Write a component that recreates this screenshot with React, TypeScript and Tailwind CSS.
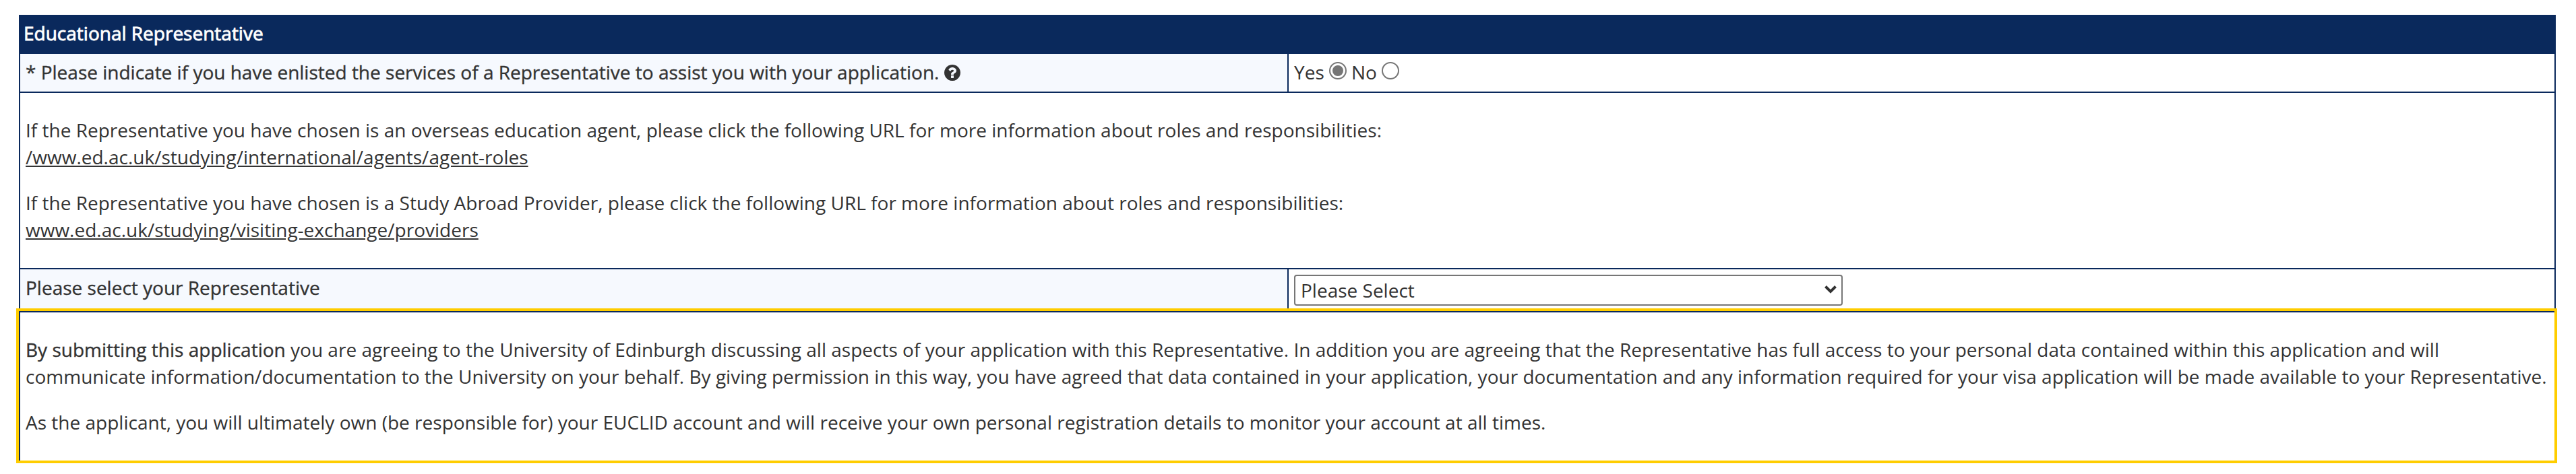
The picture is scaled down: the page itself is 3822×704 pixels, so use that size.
export default function App() {
  return (
    <div className="h-[704px] w-[3822px] bg-white pt-[22px] pl-[24px] font-['Open_Sans',sans-serif] text-[28px] leading-[40px] text-[#333]">
      <div className="ml-[4px] w-[3764px] border-x-2 border-[#0a295c]">
        <h2 className="h-[58px] bg-[#0a295c] pt-[7px] pl-[5px] text-white [-webkit-text-stroke:0.8px_white]">
          Educational Representative
        </h2>
        <div className="flex h-[58px] border-b-2 border-[#0a295c]">
          <div className="flex w-[1882px] shrink-0 items-start border-r-2 border-[#0a295c] bg-[#f6f9fe] pt-[7px] pl-[8px] [-webkit-text-stroke:0.35px_#333]">
            <span className="whitespace-pre">* Please indicate if you have enlisted the services of a Representative to assist you with your application. </span>
            <svg className="mt-[7px] h-[28px] w-[24px]" viewBox="0 0 1536 1792" fill="#333" stroke="none">
              <path d="M896 1376v-192q0-14-9-23t-23-9H672q-14 0-23 9t-9 23v192q0 14 9 23t23 9h192q14 0 23-9t9-23zm256-672q0-88-55.500-163T958 425t-170-41q-243 0-371 213-15 24 8 42l132 100q7 6 19 6 16 0 25-12 53-68 86-92 34-24 86-24 48 0 85.500 26t37.500 59q0 38-20 61t-68 45q-63 28-115.500 86.500T640 1020v36q0 14 9 23t23 9h192q14 0 23-9t9-23q0-19 21.500-49.500T972 957q32-18 49-28.500t46-35 44.500-48 28-60.500 12.500-81zm384 192q0 209-103 385.500T1153.500 1561 768 1664t-385.500-103T103 1281.500 0 896t103-385.500T382.500 231 768 128t385.500 103T1433 510.500 1536 896z" />
            </svg>
          </div>
          <div className="flex items-start pt-[7px] pl-[8px]">
            <span className="w-[52px]">Yes</span>
            <span className="mt-[5px] flex h-[26px] w-[26px] items-center justify-center rounded-full border-2 border-[#767676]">
              <span className="h-[16px] w-[16px] rounded-full bg-[#767676]" />
            </span>
            <span className="ml-[7px] w-[45px]">No</span>
            <span className="mt-[5px] h-[26px] w-[26px] rounded-full border-2 border-[#767676]" />
          </div>
        </div>
        <div className="h-[262px] border-b-2 border-[#0a295c] pt-[35px] pl-[8px] tracking-[0.007px]">
          <p>
            If the Representative you have chosen is an overseas education agent, please click the following URL for more information about roles and responsibilities:
            <br />
            <a className="underline">/www.ed.ac.uk/studying/international/agents/agent-roles</a>
          </p>
          <p className="mt-[28px]">
            If the Representative you have chosen is a Study Abroad Provider, please click the following URL for more information about roles and responsibilities:
            <br />
            <a className="underline">www.ed.ac.uk/studying/visiting-exchange/providers</a>
          </p>
        </div>
        <div className="flex h-[58px]">
          <div className="w-[1882px] shrink-0 border-r-2 border-[#0a295c] bg-[#f6f9fe] pt-[7px] pl-[8px] [-webkit-text-stroke:0.35px_#333]">
            Please select your Representative
          </div>
          <div className="pt-[8px] pl-[8px]">
            <div className="flex h-[46px] w-[814px] items-center justify-between rounded-[4px] border-2 border-[#767676] pr-[7px] pl-[8px]">
              <span>Please Select</span>
              <svg className="mb-[2px] h-[12px] w-[18px]" viewBox="0 0 18 12" fill="none" stroke="#333" strokeWidth="4">
                <path d="M1.500 1.500 9 9 16.500 1.500" />
              </svg>
            </div>
          </div>
        </div>
      </div>
      <div className="h-[230px] w-[3770px] border-4 border-[#ffcd00]">
        <div className="h-[222px] border-t-2 border-l-2 border-[#0a295c] pt-[35px] pl-[8px] tracking-[0.007px] whitespace-nowrap">
          <p>
            <span className="[-webkit-text-stroke:0.35px_#333]">By submitting this application</span> you are agreeing to the University of Edinburgh discussing all aspects of your application with this Representative. In addition you are agreeing that the Representative has full access to your personal data contained within this application and will
            <br />
            communicate information/documentation to the University on your behalf. By giving permission in this way, you have agreed that data contained in your application, your documentation and any information required for your visa application will be made available to your Representative.
          </p>
          <p className="mt-[28px]">
            As the applicant, you will ultimately own (be responsible for) your EUCLID account and will receive your own personal registration details to monitor your account at all times.
          </p>
        </div>
      </div>
    </div>
  );
}
